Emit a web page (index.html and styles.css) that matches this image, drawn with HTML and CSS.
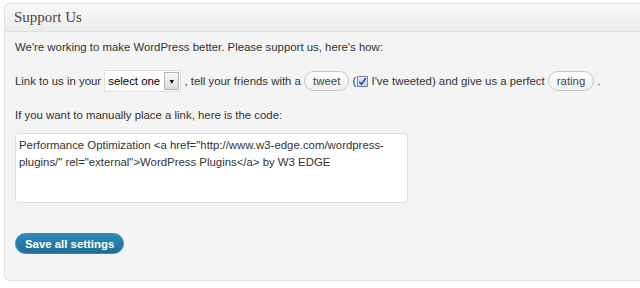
FILE: index.html
```html
<!DOCTYPE html>
<html lang="en">
<head>
    <meta charset="UTF-8">
    <title>Support Us</title>
    <link rel="stylesheet" href="styles.css">
</head>
<body>

<div class="postbox">
    <h3 class="hndle">Support Us</h3>
    <div class="inside">
        <p class="intro">We're working to make WordPress better. Please support us, here's how:</p>
        <p class="support-line">Link to us in your <span class="select">select one <span class="select-arrow">&#9660;</span></span> , tell your friends with a <span class="pill">tweet</span> (<span class="checkbox"><svg width="9" height="9" viewBox="0 0 9 9"><path d="M1.3 4.6 L3.4 7.2 L7.9 1" fill="none" stroke="#2a4b9a" stroke-width="1.5"/></svg></span> I've tweeted) and give us a perfect <span class="pill">rating</span> .</p>
        <p>If you want to manually place a link, here is the code:</p>
        <div class="code">Performance Optimization &lt;a href="http://www.w3-edge.com/wordpress-plugins/" rel="external"&gt;WordPress Plugins&lt;/a&gt; by W3 EDGE</div>
        <div class="submit">
            <button class="button-primary">Save all settings</button>
        </div>
    </div>
</div>

</body>
</html>
```

FILE: styles.css
```css
body {
    margin: 0;
    padding: 3px 0 0 4px;
    background-color: #fff;
    font-family: "Liberation Sans", Arial, sans-serif;
    font-size: 11.4px;
    color: #333;
}
.postbox {
    background-color: #f4f4f4;
    border: 1px solid #dfdfdf;
    border-right: none;
    border-radius: 6px 0 0 6px;
    height: 278px;
    box-sizing: border-box;
}
.hndle {
    margin: 0;
    height: 27px;
    line-height: 27px;
    padding-left: 9px;
    font-family: "Liberation Serif", Georgia, serif;
    font-weight: normal;
    font-size: 15px;
    color: #464646;
    background: linear-gradient(#f9f9f9, #ececec);
    border-bottom: 1px solid #dfdfdf;
    border-radius: 6px 0 0 0;
}
.inside {
    padding: 0 10px;
}
.inside p {
    margin: 9px 0 0 0;
    line-height: 18px;
    white-space: nowrap;
}
.inside .intro {
    margin-top: 6px;
}
.support-line {
    padding-top: 7px;
    padding-bottom: 5px;
}
.select {
    display: inline-block;
    position: relative;
    vertical-align: middle;
    width: 77px;
    height: 22px;
    line-height: 20px;
    padding-left: 3px;
    background-color: #fff;
    border: 1px solid #dfdfdf;
    box-sizing: border-box;
    color: #000;
    margin: -2px 0 0 0;
}
.select-arrow {
    position: absolute;
    top: 1px;
    right: 1px;
    width: 15px;
    height: 18px;
    line-height: 17px;
    text-align: center;
    font-size: 7px;
    background: linear-gradient(#fafafa, #dadada);
    border: 1px solid #b5b5b5;
    box-sizing: border-box;
    color: #000;
}
.pill {
    display: inline-block;
    vertical-align: middle;
    padding: 0 8px;
    height: 20px;
    line-height: 18px;
    box-sizing: border-box;
    border: 1px solid #c8c8c8;
    border-radius: 11px;
    background: linear-gradient(#fefefe, #f0f0f0);
    color: #464646;
    margin-top: -2px;
}
.checkbox {
    display: inline-flex;
    vertical-align: middle;
    align-items: center;
    justify-content: center;
    width: 11px;
    height: 11px;
    box-sizing: border-box;
    border: 1px solid #7b8ca8;
    background: linear-gradient(#e4e9f3, #c3cfe6);
    margin: -2px 0 0 1px;
}
.code {
    margin-top: 9px;
    width: 393px;
    height: 70px;
    box-sizing: border-box;
    padding: 3px 3px;
    line-height: 17px;
    background-color: #fff;
    border: 1px solid #dfdfdf;
    border-radius: 3px;
    color: #333;
}
.submit {
    padding-top: 30px;
}
.button-primary {
    height: 21px;
    padding: 0 9px;
    border: 1px solid #298cba;
    border-radius: 11px;
    background: linear-gradient(#2e8ab8, #1f6d96);
    color: #fff;
    font-family: "Liberation Sans", Arial, sans-serif;
    font-size: 11.4px;
    font-weight: bold;
    cursor: pointer;
}
```
